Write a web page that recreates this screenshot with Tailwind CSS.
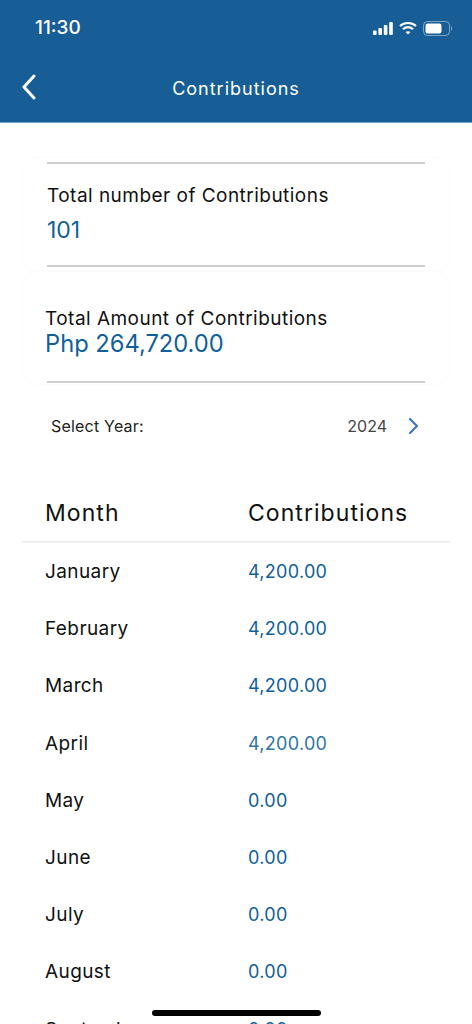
<!DOCTYPE html>
<html lang="en">
  <head>
    <meta charset="UTF-8" />
    <meta name="viewport" content="width=device-width, initial-scale=1.0" />
    <title>Contributions</title>
    <script src="https://cdn.jsdelivr.net/npm/@tailwindcss/browser@4"></script>
  </head>
  <body class="bg-white font-['Inter',sans-serif] text-[#111]">
    <div class="relative h-[1024px] w-[472px] overflow-hidden">
      <header class="h-[123px] bg-[#175e96] text-white">
        <div class="flex h-[56px] items-center justify-between pl-[35px] pr-[19px]">
          <span class="text-[19px] font-medium">11:30</span>
          <div class="flex items-center gap-[6px]">
            <svg width="20" height="13" viewBox="0 0 20 13" fill="white">
              <rect x="0" y="8.5" width="3.6" height="4.5" rx="1" />
              <rect x="5.4" y="6" width="3.6" height="7" rx="1" />
              <rect x="10.8" y="3" width="3.6" height="10" rx="1" />
              <rect x="16.2" y="0" width="3.6" height="13" rx="1" />
            </svg>
            <svg width="18" height="14" viewBox="0 0 18 14" fill="none" stroke="white" stroke-width="2.2">
              <path d="M1 5 C5.5 1 12.5 1 17 5" />
              <path d="M4 8.2 C7 5.8 11 5.8 14 8.2" />
              <path d="M9 13.5 L6.6 11 C8 10 10 10 11.4 11 Z" fill="white" stroke="none" />
            </svg>
            <svg width="30" height="15" viewBox="0 0 30 15" fill="none">
              <rect x="0.5" y="0.5" width="26" height="14" rx="4" stroke="white" stroke-opacity="0.45" />
              <rect x="2.5" y="2.5" width="16" height="10" rx="2.2" fill="white" />
              <path d="M28 5 C29.2 5.5 29.2 9.5 28 10 Z" fill="white" fill-opacity="0.5" />
            </svg>
          </div>
        </div>
        <div class="relative flex h-[64px] items-center justify-center">
          <svg class="absolute left-[21px] top-[18px]" width="16" height="26" viewBox="0 0 16 26" fill="none" stroke="white" stroke-width="3" stroke-linecap="round" stroke-linejoin="round">
            <path d="M13 2 L3 13 L13 24" />
          </svg>
          <h1 class="text-[18px] tracking-[1px]">Contributions</h1>
        </div>
      </header>
      <div class="relative -mt-px h-px bg-[#6fa0c8]"></div>

      <main class="px-[22px]">
        <section class="mt-[34px] h-[114px] rounded-[14px] border border-[#fcfcfc] px-[24px] pt-[4px]">
          <div class="h-[2px] bg-[#cfcfd3]"></div>
          <p class="mt-[20px] text-[19px] leading-[24px] tracking-[0.47px]">Total number of Contributions</p>
          <p class="mt-[8px] text-[23px] leading-[28px] text-[#10619a]">101</p>
          <div class="mt-[21px] h-[2px] bg-[#cfcfd3]"></div>
        </section>

        <section class="h-[114px] rounded-[14px] border border-[#fcfcfc] px-[24px] pt-[35px]">
          <p class="-ml-[2px] text-[19px] leading-[24px] tracking-[0.47px]">Total Amount of Contributions</p>
          <p class="-ml-[2px] -mt-px text-[23.7px] leading-[28px] text-[#10619a]">Php 264,720.00</p>
          <div class="mt-[23px] h-[2px] bg-[#cfcfd3]"></div>
        </section>

        <div class="mt-[27px] flex items-center pl-[29px] pr-[31px] text-[16px] leading-[28px]">
          <span class="tracking-[0.2px] text-[#222]">Select Year:</span>
          <span class="ml-auto text-[#444]">2024</span>
          <svg class="ml-[21px]" width="11" height="18" viewBox="0 0 11 18" fill="none" stroke="#3f74c4" stroke-width="2.2" stroke-linecap="round" stroke-linejoin="round">
            <path d="M2 2 L9 9 L2 16" />
          </svg>
        </div>

        <div class="mt-[58px] grid h-[45px] grid-cols-[203px_1fr] items-start border-b-2 border-[#efefef] pl-[23px] text-[23px] leading-[30px] tracking-[1.05px]">
          <span>Month</span>
          <span>Contributions</span>
        </div>

        <div class="grid grid-cols-[203px_1fr] pl-[23px] text-[19px] leading-[57.2px] tracking-[0.4px]">
          <span>January</span><span class="text-[18px] tracking-[0.3px] text-[#10619a]">4,200.00</span>
          <span>February</span><span class="text-[18px] tracking-[0.3px] text-[#10619a]">4,200.00</span>
          <span>March</span><span class="text-[18px] tracking-[0.3px] text-[#10619a]">4,200.00</span>
          <span>April</span><span class="text-[18px] tracking-[0.3px] text-[#2f75a6]">4,200.00</span>
          <span>May</span><span class="text-[18px] tracking-[0.3px] text-[#10619a]">0.00</span>
          <span>June</span><span class="text-[18px] tracking-[0.3px] text-[#10619a]">0.00</span>
          <span>July</span><span class="text-[18px] tracking-[0.3px] text-[#10619a]">0.00</span>
          <span>August</span><span class="text-[18px] tracking-[0.3px] text-[#10619a]">0.00</span>
          <span>September</span><span class="text-[18px] tracking-[0.3px] text-[#10619a]">0.00</span>
        </div>
      </main>

      <div class="absolute bottom-[8px] left-[152px] h-[6px] w-[169px] rounded-full bg-black"></div>
    </div>
  </body>
</html>
